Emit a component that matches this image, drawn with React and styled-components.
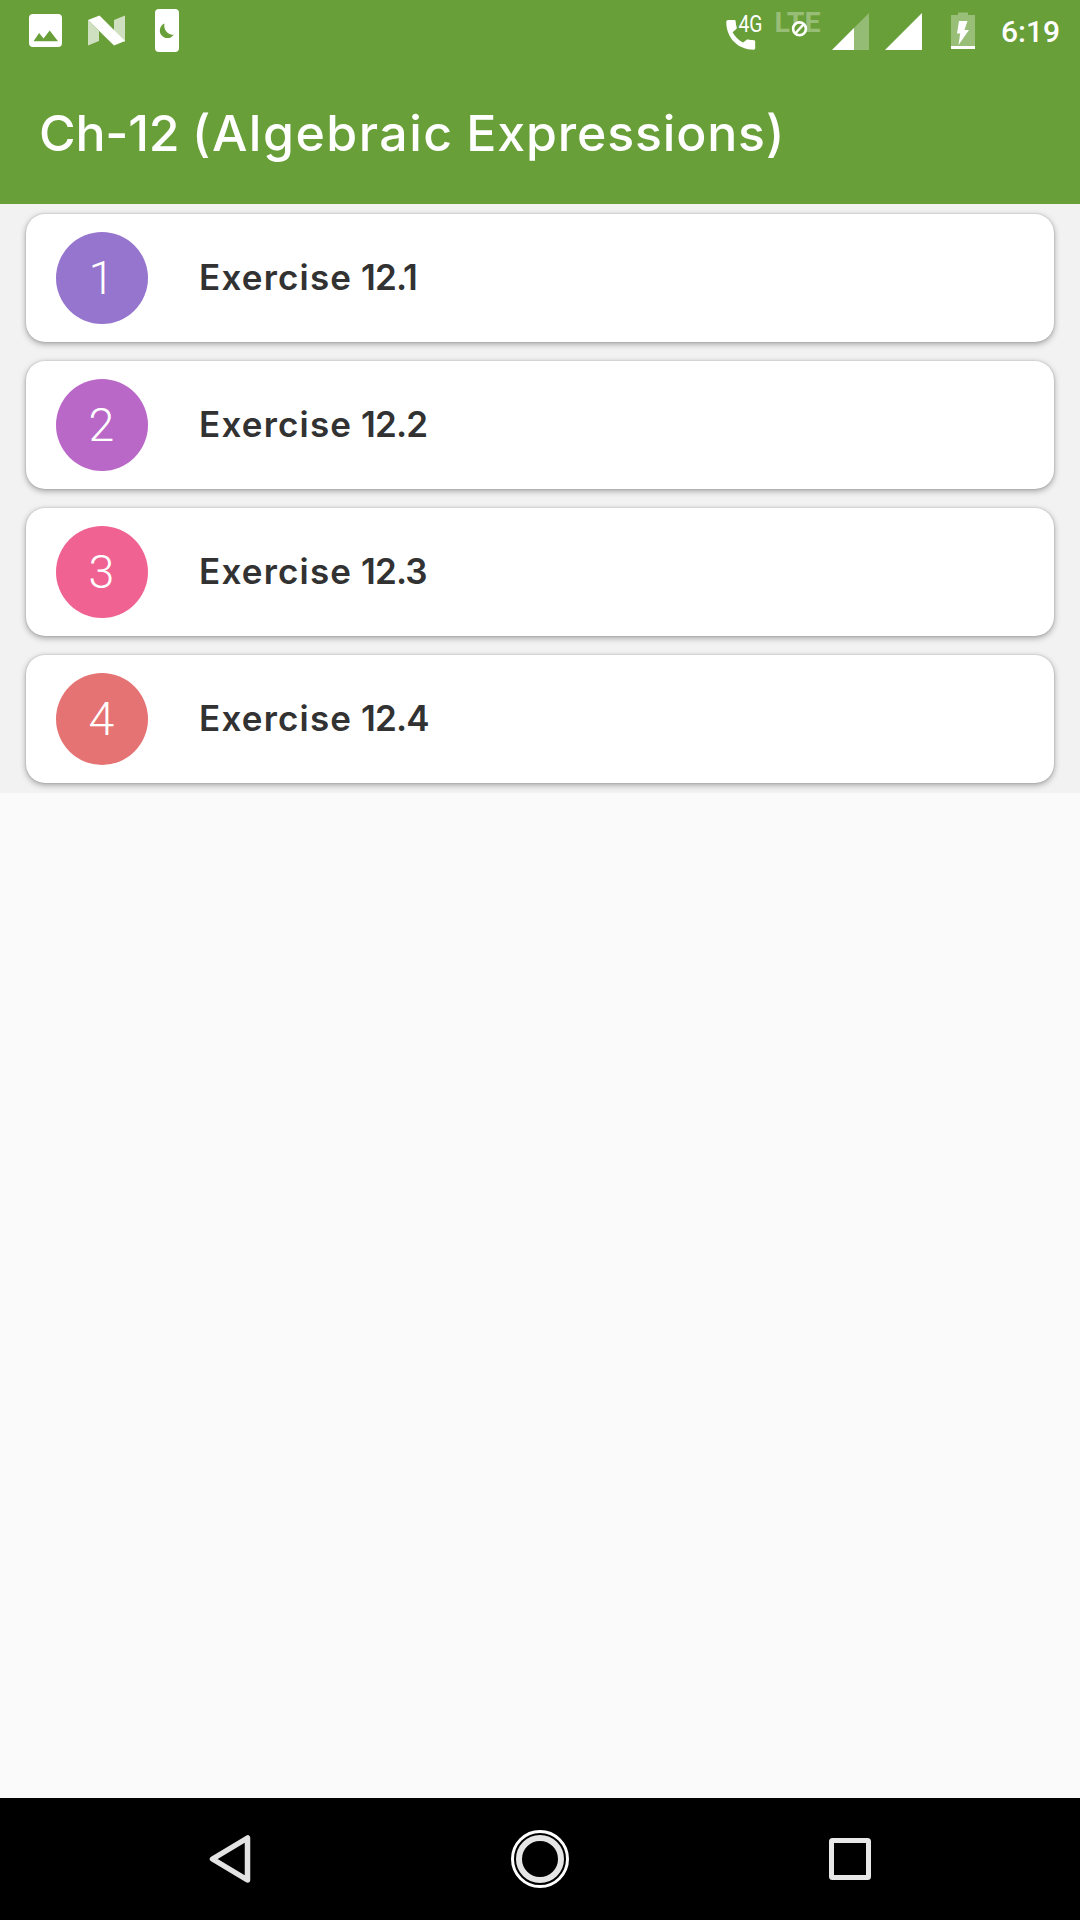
import React from "react";
import styled, { createGlobalStyle } from "styled-components";

const GlobalStyle = createGlobalStyle`
  * { box-sizing: border-box; }
  body { margin: 0; background: #fafafa; }
`;

const Screen = styled.div`
  display: flex;
  flex-direction: column;
  width: 1080px;
  height: 1920px;
  overflow: hidden;
  background: #fafafa;
  font-family: Inter, "Open Sans", sans-serif;
`;

const StatusBar = styled.div`
  display: flex;
  justify-content: space-between;
  height: 64px;
  padding: 0 20px 0 29px;
  background: #689f38;
`;

const IconGroup = styled.div`
  display: flex;
  align-items: flex-start;
`;

const Icon = styled.svg`
  display: block;
  flex: none;
  margin-left: ${(p) => p.$before || 0}px;
  overflow: visible;
  font-family: Roboto, sans-serif;
`;

const Clock = styled.span`
  width: 59px;
  margin-left: 26px;
  font: 500 30px/64px Roboto, sans-serif;
  color: #fff;
  white-space: nowrap;
`;

const AppBar = styled.header`
  display: flex;
  align-items: center;
  height: 140px;
  padding: 0 39px 2px;
  background: #689f38;
`;

const Title = styled.h1`
  margin: 0;
  font-size: 50px;
  font-weight: 500;
  line-height: 60px;
  word-spacing: -0.8px;
  color: #fff;
  white-space: nowrap;
`;

const Word = styled.span`
  letter-spacing: ${(p) => p.$tracking}px;
`;

const List = styled.main`
  display: flex;
  flex-direction: column;
  gap: 19px;
  height: 589px;
  padding: 10px 26px;
  background: #f2f2f2;
  overflow: hidden;
`;

const Card = styled.section`
  display: flex;
  align-items: center;
  flex: none;
  gap: 51px;
  height: 128px;
  padding: 0 30px;
  border-radius: 19px;
  background: #fff;
  box-shadow: 0 2px 6px rgba(0, 0, 0, 0.34), 0 0 2px rgba(0, 0, 0, 0.2);
`;

const Badge = styled.span`
  display: flex;
  align-items: center;
  justify-content: center;
  width: 92px;
  height: 92px;
  padding-right: 1px;
  border-radius: 50%;
  background: ${(p) => p.$color};
  font: 300 46.5px/92px Roboto, sans-serif;
  color: #fff;
`;

const Label = styled.span`
  margin-bottom: 2px;
  font-size: 35px;
  font-weight: 600;
  line-height: 44px;
  color: #323232;
  white-space: nowrap;
`;

const NavBar = styled.nav`
  display: flex;
  align-items: center;
  justify-content: space-between;
  height: 122px;
  margin-top: auto;
  padding: 0 200px;
  background: #000;
`;

const exercises = [
  { number: 1, color: "#9575cd" },
  { number: 2, color: "#ba68c8" },
  { number: 3, color: "#f06292" },
  { number: 4, color: "#e57373" },
];

function PictureIcon() {
  return (
    <Icon width="34" height="64">
      <path
        fill="#fff"
        fillRule="evenodd"
        d="M4 14h25a4 4 0 0 1 4 4v25a4 4 0 0 1-4 4H4a4 4 0 0 1-4-4V18a4 4 0 0 1 4-4zM4.500 41.300h24.500L20.700 30.500l-6.200 8-4.400-5.400z"
      />
    </Icon>
  );
}

function NougatIcon() {
  return (
    <Icon width="38" height="64" $before={25}>
      <path fill="#fff" opacity=".68" d="M0 20l11 11v10L0 45.500zM26 20l11-4.500V42L26 31z" />
      <path fill="#fff" d="M0 20l11.500-4.500L37 41l-11 4.500z" />
    </Icon>
  );
}

function NightModeIcon() {
  return (
    <Icon width="24" height="64" $before={29}>
      <rect y="9" width="24" height="43" rx="4" fill="#fff" />
      <path fill="#689f38" d="M9.500 23.500A7.600 7.600 0 1 0 18.700 34.800 9.200 9.200 0 0 1 9.500 23.500z" />
    </Icon>
  );
}

function CallIcon() {
  return (
    <Icon width="40" height="64">
      <path
        fill="#fff"
        d="M2 20h6.300c1 0 1.300.6 1.400 1.400.1 2 .4 4 1 5.800.2.700.1 1.200-.4 1.700l-3.700 3.400a25 25 0 0 0 10.400 10.300l3.400-2.600c.5-.5 1-.6 1.700-.4 1.800.6 3.700.5 5.700.6.800 0 1.400.5 1.400 1.400v6.500c0 .9-.6 1.600-1.500 1.600C12 49.700.300 38 .3 22c0-1.200.7-2 1.700-2z"
      />
      <text x="12.500" y="31.700" fontSize="23.500" fill="#fff" textLength="24" lengthAdjust="spacingAndGlyphs">4G</text>
    </Icon>
  );
}

function LteIcon() {
  return (
    <Icon width="46" height="64" $before={10}>
      <text x="-1.500" y="32" fontSize="28" fontWeight="700" fill="#fff" fillOpacity=".32" textLength="46" lengthAdjust="spacingAndGlyphs">LTE</text>
      <circle cx="23.500" cy="28.800" r="6.400" fill="#689f38" stroke="#fff" strokeWidth="2.600" />
      <path d="M19.500 33.200l8-8.800" stroke="#fff" strokeWidth="2.400" />
    </Icon>
  );
}

function SignalIcon({ partial, before }) {
  return (
    <Icon width="37" height="64" $before={before}>
      <path fill="#fff" opacity={partial ? 0.3 : 1} d="M37 13v37H0z" />
      {partial && <path fill="#fff" d="M22 28v22H0z" />}
    </Icon>
  );
}

function BatteryIcon() {
  return (
    <Icon width="24" height="64" $before={29}>
      <path fill="#fff" opacity=".32" d="M7 12.500h10V15h7v31H0V15h7z" />
      <path fill="#fff" d="M0 46h24v3H0zM8 21h8.500l-3 9h4.500L7.500 45l1.700-11.500H6z" />
    </Icon>
  );
}

export default function App() {
  return (
    <Screen>
      <GlobalStyle />
      <StatusBar>
        <IconGroup>
          <PictureIcon />
          <NougatIcon />
          <NightModeIcon />
        </IconGroup>
        <IconGroup>
          <CallIcon />
          <LteIcon />
          <SignalIcon partial before={10} />
          <SignalIcon before={16} />
          <BatteryIcon />
          <Clock>6:19</Clock>
        </IconGroup>
      </StatusBar>
      <AppBar>
        <Title>
          <Word $tracking={-0.2}>Ch-12</Word> <Word $tracking={1.5}>(Algebraic</Word>{" "}
          <Word $tracking={0.85}>Expressions)</Word>
        </Title>
      </AppBar>
      <List>
        {exercises.map((e) => (
          <Card key={e.number}>
            <Badge $color={e.color}>{e.number}</Badge>
            <Label>
              <Word $tracking={1.2}>Exercise</Word> <Word $tracking={-0.9}>12.{e.number}</Word>
            </Label>
          </Card>
        ))}
      </List>
      <NavBar>
        <Icon width="60" height="60" viewBox="200 1829 60 60">
          <path d="M247.500 1838v42l-35-21z" fill="none" stroke="#e3e3e3" strokeWidth="5.500" strokeLinejoin="round" />
        </Icon>
        <Icon width="60" height="60">
          <circle cx="30" cy="30" r="27.500" fill="none" stroke="#fff" strokeWidth="3" />
          <circle cx="30" cy="30" r="21" fill="none" stroke="#e5e5e5" strokeWidth="6" />
        </Icon>
        <Icon width="60" height="60" viewBox="820 1829 60 60">
          <rect x="831.500" y="1840.500" width="37" height="37" rx="1" fill="none" stroke="#e8e8e8" strokeWidth="5" />
        </Icon>
      </NavBar>
    </Screen>
  );
}
